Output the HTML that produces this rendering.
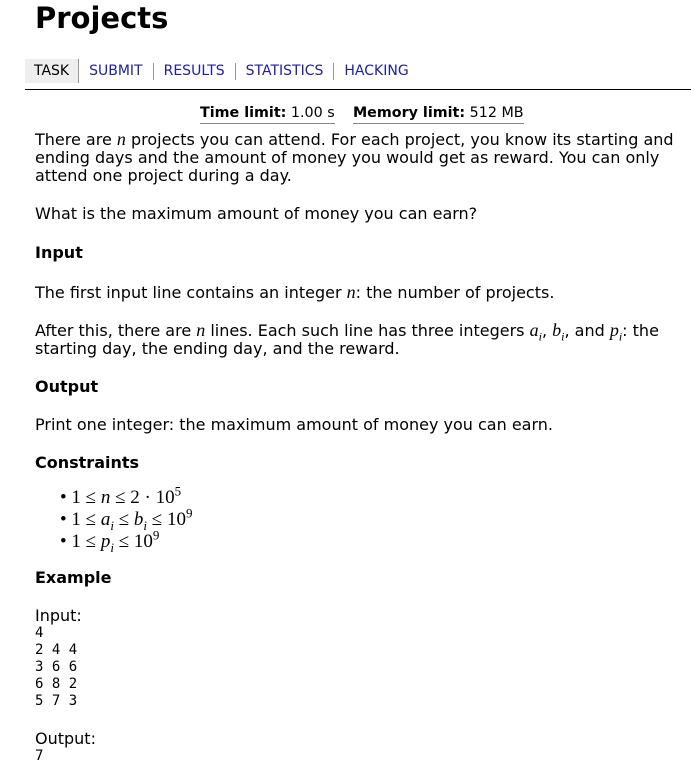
<!DOCTYPE html>
<html><head><meta charset="utf-8"><style>
body{margin:0;background:#fff;font-family:"DejaVu Sans","Liberation Sans",sans-serif;color:#000;width:691px;height:782px;overflow:hidden;position:relative}
.a{position:absolute;white-space:nowrap;font-size:16px;line-height:18px}
.m{font-family:"Liberation Serif",serif;font-style:italic;font-size:18px}
.r{font-family:"Liberation Serif",serif;font-size:19px}
sub,sup{line-height:0}
h1{position:absolute;left:35px;top:0;margin:0;font-size:29px;line-height:36px;font-weight:bold}
.nav{position:absolute;left:25px;top:59px;height:24px;font-size:14px;line-height:24px}
.nav span{float:left;padding:0 10px;border-right:1px solid #999;height:17px;line-height:17px;margin-top:4px;color:#2020a0}
.nav span.t{background:#eee;color:#000;height:24px;line-height:24px;margin-top:0;padding:0 9px}
.nav span:last-child{border:none}
.hr{position:absolute;left:25px;top:89px;width:666px;height:1px;background:#000}
.b{font-weight:bold}
pre{position:absolute;left:35px;margin:0;font-family:"DejaVu Sans Mono",monospace;font-size:14px;line-height:17px}
</style></head><body>
<h1>Projects</h1>
<div class="nav"><span class="t">TASK</span><span>SUBMIT</span><span>RESULTS</span><span>STATISTICS</span><span>HACKING</span></div>
<div class="hr"></div>
<div class="a" style="left:200px;top:104px;font-size:14.3px"><span style="border-bottom:1px solid #888;padding-bottom:2px"><b>Time limit:</b> 1.00 s</span>&nbsp;&nbsp;&nbsp; <span style="border-bottom:1px solid #888;padding-bottom:2px"><b>Memory limit:</b> 512 MB</span></div>
<div class="a" style="left:35px;top:130px">There are <span class="m">n</span> projects you can attend. For each project, you know its starting and<br>ending days and the amount of money you would get as reward. You can only<br>attend one project during a day.</div>
<div class="a" style="left:35px;top:205px">What is the maximum amount of money you can earn?</div>
<div class="a b" style="left:35px;top:244px">Input</div>
<div class="a" style="left:35px;top:283px">The first input line contains an integer <span class="m">n</span>: the number of projects.</div>
<div class="a" style="left:35px;top:321px">After this, there are <span class="m">n</span> lines. Each such line has three integers <span class="m">a<sub style="font-size:12px">i</sub></span>, <span class="m">b<sub style="font-size:12px">i</sub></span>, and <span class="m">p<sub style="font-size:12px">i</sub></span>: the<br>starting day, the ending day, and the reward.</div>
<div class="a b" style="left:35px;top:378px">Output</div>
<div class="a" style="left:35px;top:416px">Print one integer: the maximum amount of money you can earn.</div>
<div class="a b" style="left:35px;top:454px">Constraints</div>
<div class="a r" style="left:60px;top:489px">• 1 ≤ <i>n</i> ≤ 2 · 10<sup style="font-size:13px">5</sup></div>
<div class="a r" style="left:60px;top:511px">• 1 ≤ <i>a<sub style="font-size:13px">i</sub></i> ≤ <i>b<sub style="font-size:13px">i</sub></i> ≤ 10<sup style="font-size:13px">9</sup></div>
<div class="a r" style="left:60px;top:533px">• 1 ≤ <i>p<sub style="font-size:13px">i</sub></i> ≤ 10<sup style="font-size:13px">9</sup></div>
<div class="a b" style="left:35px;top:569px">Example</div>
<div class="a" style="left:35px;top:607px">Input:</div>
<pre style="top:625px">4
2 4 4
3 6 6
6 8 2
5 7 3</pre>
<div class="a" style="left:35px;top:730px">Output:</div>
<pre style="top:748px">7</pre>
</body></html>
